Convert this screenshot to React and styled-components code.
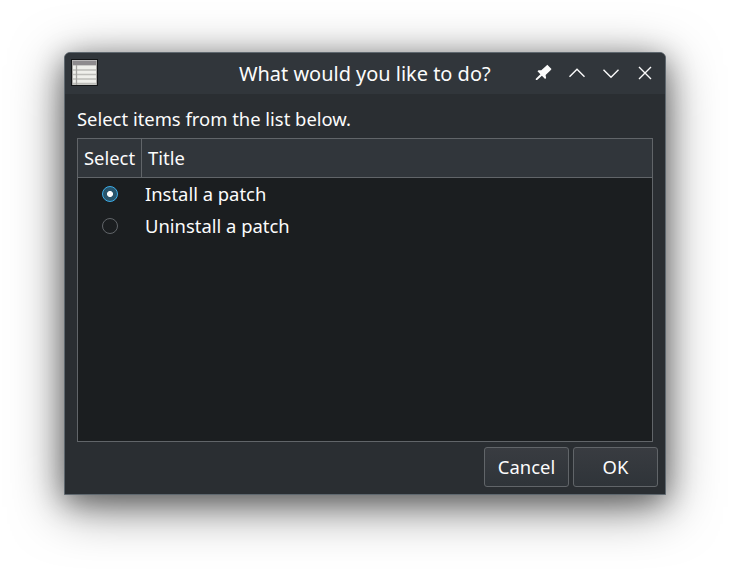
import React, { useState } from "react";
import styled, { createGlobalStyle } from "styled-components";

const GlobalStyle = createGlobalStyle`
  *, *::before, *::after { box-sizing: border-box; }
  html, body { margin: 0; background: #fff; }
`;

const Desktop = styled.div`
  width: 730px;
  height: 571px;
  padding: 52px 64px 0;
  overflow: hidden;
  background: #fff;
  font: 18.42px/26px "Noto Sans", sans-serif;
  color: #fcfcfc;
`;

const Window = styled.main`
  display: flex;
  flex-direction: column;
  width: 602px;
  height: 443px;
  border: 1px solid #5f686f;
  border-radius: 6px 6px 0 0;
  background: #2a2e32;
  box-shadow: 0 12px 52px rgba(0, 0, 0, 0.5), 0 7px 28px rgba(0, 0, 0, 0.38);
`;

const TitleBar = styled.header`
  display: flex;
  align-items: center;
  flex: none;
  height: 41px;
  padding: 0 7px 1px 6px;
  border-radius: 5px 5px 0 0;
  background: #31363b;
`;

const Title = styled.h1`
  flex: 1;
  margin: 0;
  padding: 2px 0 0 141px;
  font-size: 19.95px;
  font-weight: 400;
  line-height: 28px;
  white-space: nowrap;
`;

const WindowControls = styled.div`
  display: flex;
  gap: 8px;
`;

const ControlButton = styled.button`
  display: grid;
  place-items: center;
  width: 26px;
  height: 26px;
  padding: 0;
  border: 0;
  background: none;
  color: #fcfcfc;

  svg { display: block; }
`;

const Content = styled.section`
  display: flex;
  flex: 1;
  flex-direction: column;
  padding: 12px 12px 0;
`;

const Prompt = styled.p`
  margin: 0 0 6px;
`;

const List = styled.div`
  height: 304px;
  border: 1px solid #616569;
  background: #1b1e20;
`;

const HeaderRow = styled.div`
  display: grid;
  grid-template-columns: 64px 1fr;
  height: 39px;
  border-bottom: 1px solid #616569;
  background: #31363b;
`;

const HeaderCell = styled.div`
  padding: 6px 6px 0;
  border-right: ${({ $divided }) => ($divided ? "1px solid #616569" : "0")};
`;

const Row = styled.label`
  display: grid;
  grid-template-columns: 64px 1fr;
  align-items: center;
  height: 32px;
`;

const Radio = styled.input`
  appearance: none;
  justify-self: center;
  width: 16px;
  height: 16px;
  margin: 0;
  border: 1px solid #616569;
  border-radius: 50%;

  &:checked {
    border-color: #3daee9;
    background: radial-gradient(circle, #fcfcfc 2.6px, #28546b 3.4px);
  }
`;

const RowText = styled.span`
  padding-left: 3px;
`;

const Actions = styled.footer`
  display: flex;
  flex: none;
  justify-content: flex-end;
  gap: 4px;
  height: 47px;
  padding: 0 7px 0 0;
`;

const PushButton = styled.button`
  width: 85px;
  height: 40px;
  padding: 0 0 1px;
  border: 1px solid #616569;
  border-radius: 3px;
  background: linear-gradient(#393c41, #2f3439);
  color: inherit;
  font: inherit;
`;

const IconSvg = styled.svg`
  flex: none;
  margin-bottom: 2px;
`;

const AppIcon = () => (
  <IconSvg width="27" height="27" viewBox="0 0 27 27" aria-hidden="true">
    <rect width="27" height="27" fill="#131517" />
    <rect x="1" y="1" width="25" height="25" fill="#a9a8a6" />
    <rect x="2" y="2" width="23" height="4" fill="#8e8b8e" />
    <path d="M1 1.5h25" stroke="#b9b7b8" />
    <rect x="2" y="6.5" width="23" height="19" fill="#efefeb" />
    <path d="M2 11h23M2 15.5h23M2 20h23M2 24.5h23" stroke="#bdbdb9" strokeWidth="1.3" />
    <path d="M5.5 6v20" stroke="#a6a5a3" strokeWidth="1.3" />
  </IconSvg>
);

const PinIcon = () => (
  <svg width="18" height="18" viewBox="0 0 18 18" fill="currentColor" aria-hidden="true">
    <path d="M13.3 .8l4.2 4.2-.9 1.2-5 4.9.5 2.8-1 1-3.2-3.2-4.8 4.2H1.8v-1.2l4.6-4.5-2.9-2.9 1-1 2.8-.1 5-4.4z" />
  </svg>
);

const StrokeIcon = ({ path }) => (
  <svg width="18" height="18" viewBox="0 0 18 18" fill="none" stroke="currentColor" strokeWidth="1.4" aria-hidden="true">
    <path d={path} />
  </svg>
);

const controls = [
  { name: "Keep above", icon: <PinIcon /> },
  { name: "Maximize", icon: <StrokeIcon path="M1.5 12.7L9 5.2l7.5 7.5" /> },
  { name: "Minimize", icon: <StrokeIcon path="M1.5 5.8L9 13.3l7.5-7.5" /> },
  { name: "Close", icon: <StrokeIcon path="M3 3l12 12M15 3L3 15" /> },
];

const choices = ["Install a patch", "Uninstall a patch"];

export default function App() {
  const [selected, setSelected] = useState(choices[0]);

  return (
    <Desktop>
      <GlobalStyle />
      <Window>
        <TitleBar>
          <AppIcon />
          <Title>What would you like to do?</Title>
          <WindowControls>
            {controls.map(({ name, icon }) => (
              <ControlButton key={name} type="button" aria-label={name}>{icon}</ControlButton>
            ))}
          </WindowControls>
        </TitleBar>
        <Content>
          <Prompt>Select items from the list below.</Prompt>
          <List>
            <HeaderRow>
              <HeaderCell $divided>Select</HeaderCell>
              <HeaderCell>Title</HeaderCell>
            </HeaderRow>
            {choices.map((choice) => (
              <Row key={choice}>
                <Radio
                  type="radio"
                  name="choice"
                  checked={selected === choice}
                  onChange={() => setSelected(choice)}
                />
                <RowText>{choice}</RowText>
              </Row>
            ))}
          </List>
        </Content>
        <Actions>
          <PushButton type="button">Cancel</PushButton>
          <PushButton type="button">OK</PushButton>
        </Actions>
      </Window>
    </Desktop>
  );
}
